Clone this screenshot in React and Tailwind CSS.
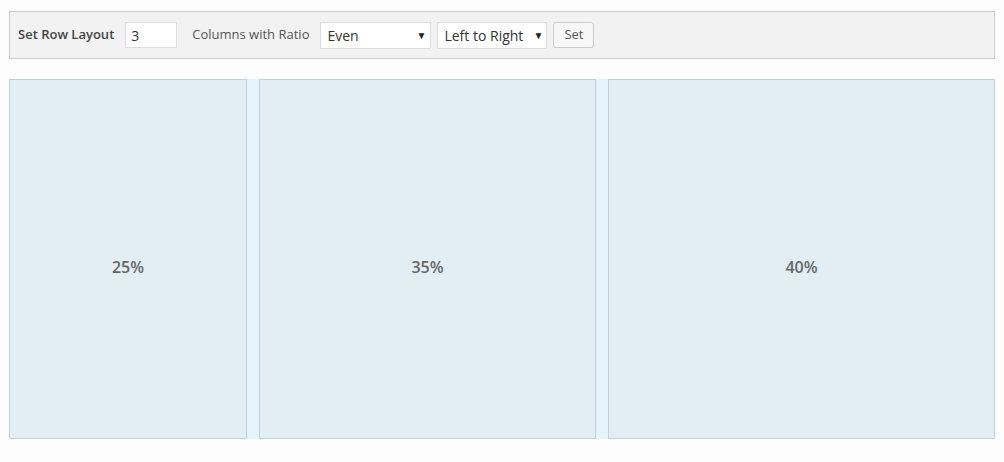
export default function App() {
  const cols = [
    { label: "25%", w: "w-[238px]" },
    { label: "35%", w: "w-[337px]" },
    { label: "40%", w: "w-[387px]" },
  ];

  return (
    <div
      className="w-[1004px] h-[462px] bg-[#fdfdfd] pt-[11px] pl-[9px] text-[#444]"
      style={{ fontFamily: '"Open Sans", sans-serif' }}
    >
      <div className="w-[986px] h-[48px] bg-[#f2f2f2] border border-[#cccccc] flex items-center pl-[8px]">
        <span className="text-[13px] font-semibold text-[#444]">Set Row Layout</span>
        <input
          type="text"
          defaultValue="3"
          className="ml-[11px] w-[52px] h-[26px] bg-white border border-[#dddddd] px-[5px] text-[14px] text-[#333] outline-none"
        />
        <span className="ml-[15px] text-[13px] text-[#555]">Columns with Ratio</span>
        <div className="ml-[11px] w-[111px] h-[27px] bg-white border border-[#dddddd] flex items-center justify-between pl-[6px] pr-[4px] text-[14px] text-[#333]">
          <span>Even</span>
          <span className="text-[10px] text-[#222]">▼</span>
        </div>
        <div className="ml-[6px] w-[110px] h-[27px] bg-white border border-[#dddddd] flex items-center justify-between pl-[6px] pr-[3px] text-[14px] text-[#333]">
          <span>Left to Right</span>
          <span className="text-[10px] text-[#222]">▼</span>
        </div>
        <button className="ml-[6px] w-[41px] h-[26px] bg-[#f7f7f7] border border-[#cccccc] rounded-[3px] text-[13px] text-[#555]">
          Set
        </button>
      </div>

      <div className="mt-[20px] w-[986px] h-[360px] bg-[#e5f4fb] flex justify-between">
        {cols.map((c) => (
          <div
            key={c.label}
            className={`${c.w} h-full bg-[#e2eef4] border border-[#bfd0d9] flex items-center justify-center pt-[16px]`}
          >
            <span className="text-[16px] font-semibold text-[#666]">{c.label}</span>
          </div>
        ))}
      </div>
    </div>
  );
}
